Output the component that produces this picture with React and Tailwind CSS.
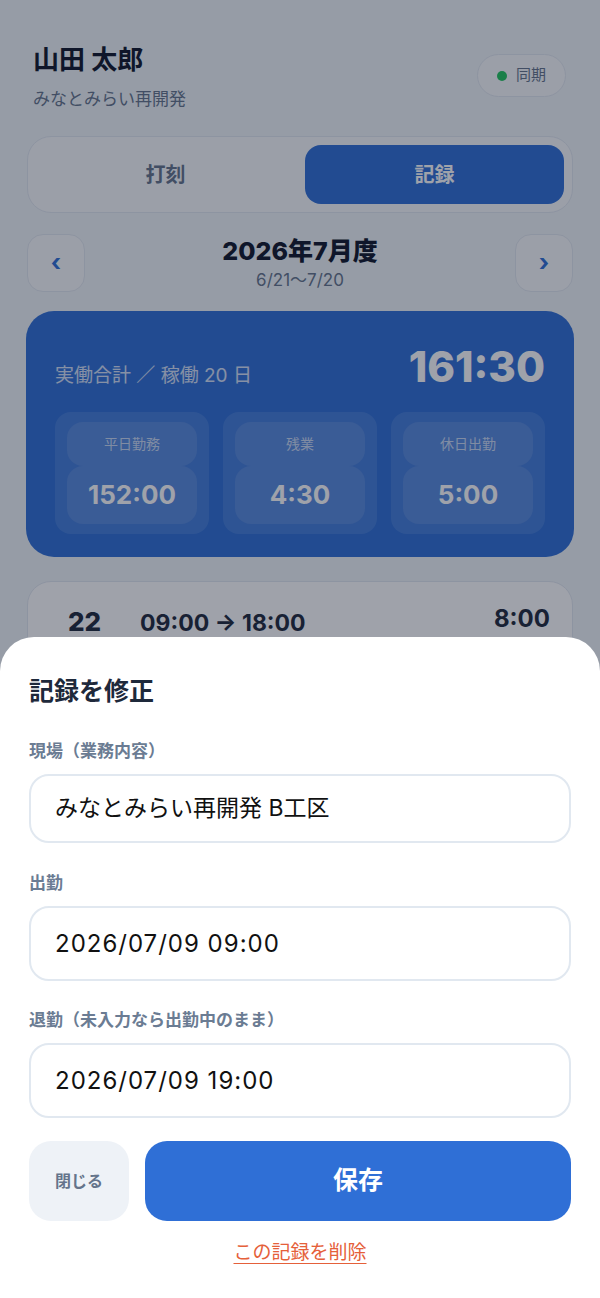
import { useState } from 'react';

const font = { fontFamily: 'Inter, "Noto Sans CJK JP", sans-serif' };

const breakdown = [
    { label: '平日勤務', value: '152:00' },
    { label: '残業', value: '4:30' },
    { label: '休日出勤', value: '5:00' },
];

const Field = ({ label, value, tall }) => (
    <div>
        <div className="text-[17px] leading-[22px] font-bold text-[#6b7c93] mb-3">{label}</div>
        <div
            className={`${tall ? 'h-[75px] text-[24px] tracking-[1px]' : 'h-[69px] text-[23px]'} rounded-[20px] border-2 border-[#e1e8f0] bg-white pl-6 flex items-center text-[#111]`}
        >
            {value}
        </div>
    </div>
);

const App = () => {
    const [tab] = useState('records');

    return (
        <div className="relative h-[1298px] overflow-hidden bg-[#f1f5f9]" style={font}>
            {/* Background page */}
            <div className="px-[27px]">
                {/* Header */}
                <div className="pt-[44px] px-[6px] pr-[7px] flex justify-between">
                    <div>
                        <div className="text-[26px] leading-[32px] font-bold text-[#0f172a]">山田 太郎</div>
                        <div className="mt-[12px] text-[17px] leading-[22px] text-[#64748b]">みなとみらい再開発</div>
                    </div>
                    <div className="mt-[10px] h-[43px] px-[19px] rounded-full bg-[#f8fafc] border border-[#e2e8f0] flex items-center gap-[9px]">
                        <span className="w-[10px] h-[10px] rounded-full bg-[#22c55e]" />
                        <span className="text-[15px] text-[#64748b]">同期</span>
                    </div>
                </div>

                {/* Tabs */}
                <div className="mt-[26px] h-[77px] rounded-[24px] bg-[#f8fafc] border border-[#e2e8f0] p-[8px] grid grid-cols-2 gap-[10px]">
                    <div className="rounded-[16px] flex items-center justify-center text-[20px] font-bold text-[#64748b]">打刻</div>
                    <div className={`rounded-[16px] flex items-center justify-center text-[20px] font-bold ${tab === 'records' ? 'bg-[#2f6fd6] text-white' : ''}`}>記録</div>
                </div>

                {/* Month nav */}
                <div className="mt-[21px] flex items-center justify-between">
                    <div className="w-[58px] h-[58px] rounded-[16px] bg-[#f8fafc] border border-[#e2e8f0] flex items-center justify-center text-[24px] font-bold text-[#2f6fd6]">‹</div>
                    <div className="text-center">
                        <div className="text-[25px] leading-[30px] font-extrabold text-[#0f172a]">2026年7月度</div>
                        <div className="mt-[4px] text-[17px] leading-[20px] text-[#64748b]">6/21〜7/20</div>
                    </div>
                    <div className="w-[58px] h-[58px] rounded-[16px] bg-[#f8fafc] border border-[#e2e8f0] flex items-center justify-center text-[24px] font-bold text-[#2f6fd6]">›</div>
                </div>

                {/* Summary */}
                <div className="mt-[19px] -mx-px rounded-[28px] bg-[#2f6fd6] px-[29px] pt-[33px] pb-[23px]">
                    <div className="flex items-baseline justify-between">
                        <div className="text-[19px] text-white/80">実働合計 ／ 稼働 20 日</div>
                        <div className="text-[42px] leading-[46px] font-extrabold text-white">161:30</div>
                    </div>
                    <div className="mt-[21px] grid grid-cols-3 gap-[14px]">
                        {breakdown.map(b => (
                            <div key={b.label} className="rounded-[16px] bg-white/10 px-[12px] py-[10px]">
                                <div className="h-[44px] rounded-[16px] bg-white/10 flex items-center justify-center text-[14px] text-white/70">{b.label}</div>
                                <div className="h-[58px] rounded-[16px] bg-white/10 flex items-center justify-center text-[26px] font-bold text-white">{b.value}</div>
                            </div>
                        ))}
                    </div>
                </div>

                {/* Record row */}
                <div className="mt-[24px] h-[120px] rounded-[24px] bg-white border border-[#e2e8f0] pl-[40px] pr-[22px] pt-[22px] flex items-start">
                    <div className="w-[72px] text-[26px] leading-[34px] font-extrabold text-[#1e293b] mt-[1px]">22</div>
                    <div className="text-[23px] leading-[34px] font-bold text-[#1e293b] mt-[2px]">09:00 → 18:00</div>
                    <div className="ml-auto text-[24px] leading-[30px] font-bold text-[#1e293b]">8:00</div>
                </div>
            </div>

            {/* Overlay */}
            <div className="absolute inset-0 bg-slate-900/40" />

            {/* Bottom sheet */}
            <div className="absolute left-0 right-0 bottom-0 bg-white rounded-t-[34px] px-[29px] pt-[39px] pb-[33px]">
                <div className="text-[25px] leading-[30px] font-bold text-[#1e293b] mb-[34px]">記録を修正</div>
                <Field label="現場（業務内容）" value="みなとみらい再開発 B工区" />
                <div className="mt-[29px]">
                    <Field label="出勤" value="2026/07/09 09:00" tall />
                </div>
                <div className="mt-[28px]">
                    <Field label="退勤（未入力なら出勤中のまま）" value="2026/07/09 19:00" tall />
                </div>
                <div className="mt-[23px] flex gap-[16px]">
                    <button className="w-[100px] h-[80px] rounded-[22px] bg-[#eef2f7] text-[16px] font-bold text-[#64748b]">閉じる</button>
                    <button className="flex-1 h-[80px] rounded-[22px] bg-[#2f6fd6] text-[25px] font-bold text-white">保存</button>
                </div>
                <div className="mt-[20px] text-center">
                    <span className="text-[19px] leading-[24px] text-[#e5603a] underline underline-offset-4">この記録を削除</span>
                </div>
            </div>
        </div>
    );
};

export default App;
